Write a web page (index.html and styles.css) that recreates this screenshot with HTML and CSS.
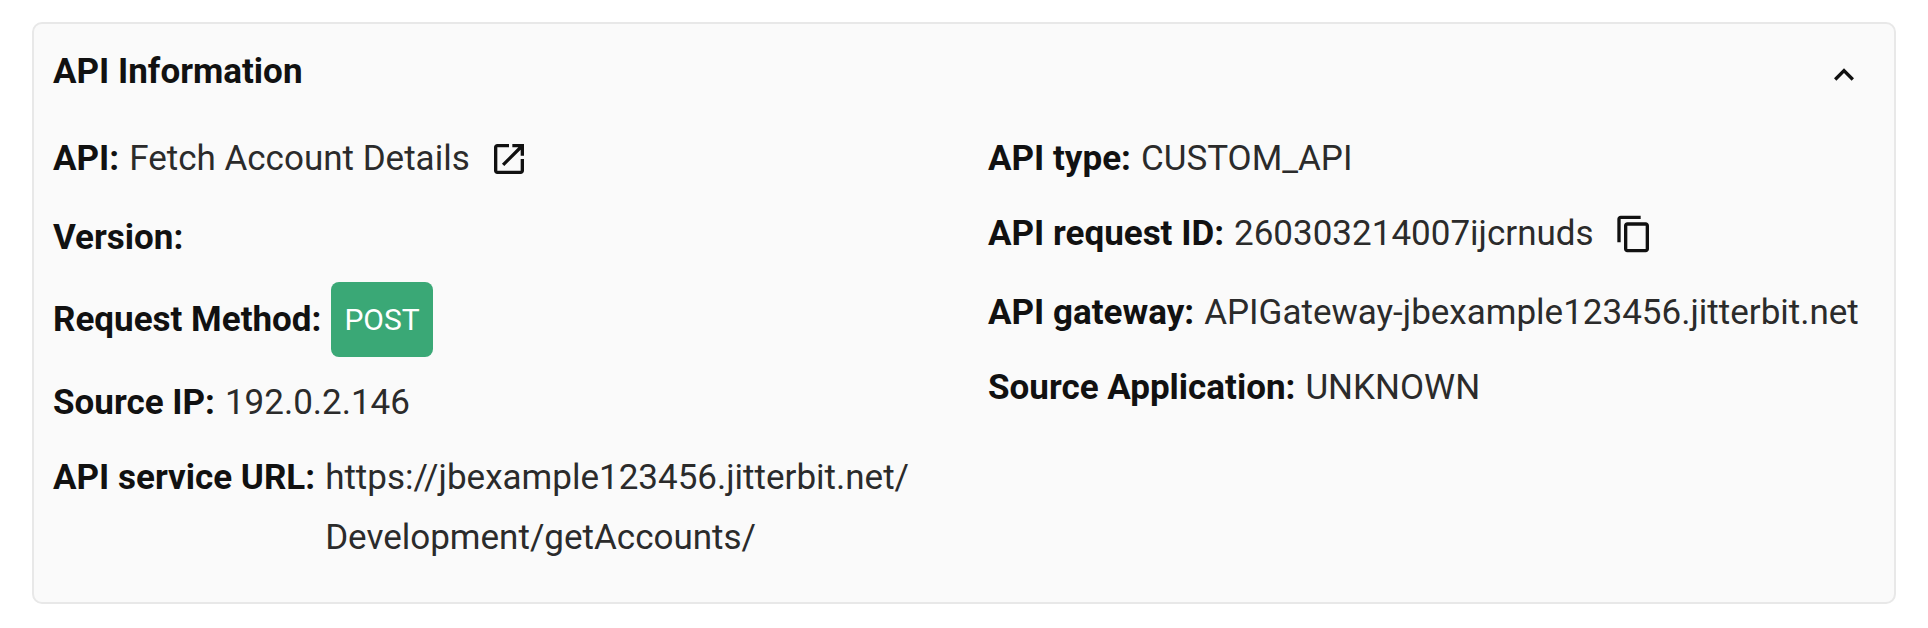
FILE: index.html
```html
<!DOCTYPE html>
<html lang="en">

<head>
    <meta charset="UTF-8">
    <meta name="viewport" content="width=device-width, initial-scale=1.0">
    <title>API Information</title>
    <link rel="stylesheet" href="styles.css">
</head>

<body>
    <div class="card">
        <div class="card-header">
            <h2 class="card-title">API Information</h2>
            <svg class="icon icon-toggle" viewBox="0 0 24 24"><path d="M12 8l-6 6 1.41 1.41L12 10.83l4.59 4.58L18 14z"/></svg>
        </div>

        <div class="columns">
            <div class="column">
                <div class="row row-icon">
                    <b>API:</b> <span>Fetch Account Details</span>
                    <svg class="icon icon-after" viewBox="0 0 24 24"><path d="M19 19H5V5h7V3H5c-1.11 0-2 .9-2 2v14c0 1.1.89 2 2 2h14c1.1 0 2-.9 2-2v-7h-2v7zM14 3v2h3.59l-9.83 9.83 1.41 1.41L19 6.41V10h2V3h-7z"/></svg>
                </div>
                <div class="row"><b>Version:</b></div>
                <div class="row row-method">
                    <b>Request Method:</b>
                    <span class="badge">POST</span>
                </div>
                <div class="row"><b>Source IP:</b> <span>192.0.2.146</span></div>
                <div class="row row-url">
                    <b>API service URL:</b>
                    <span class="url">https://jbexample123456.jitterbit.net/<br>Development/getAccounts/</span>
                </div>
            </div>

            <div class="column">
                <div class="row row-type"><b>API type:</b> <span>CUSTOM_API</span></div>
                <div class="row row-icon">
                    <b>API request ID:</b> <span>260303214007ijcrnuds</span>
                    <svg class="icon icon-after icon-copy" viewBox="0 0 24 24"><path d="M16 1H4c-1.1 0-2 .9-2 2v14h2V3h12V1zm3 4H8c-1.1 0-2 .9-2 2v14c0 1.1.9 2 2 2h11c1.1 0 2-.9 2-2V7c0-1.1-.9-2-2-2zm0 16H8V7h11v14z"/></svg>
                </div>
                <div class="row"><b>API gateway:</b> <span>APIGateway-jbexample123456.jitterbit.net</span></div>
                <div class="row"><b>Source Application:</b> <span>UNKNOWN</span></div>
            </div>
        </div>
    </div>
</body>

</html>
```

FILE: styles.css
```css
body {
    margin: 0;
    padding: 22px 32px 24px;
    font-family: Roboto, sans-serif;
    background-color: white;
}

.card {
    height: 582px;
    box-sizing: border-box;
    padding: 0 19px;
    background-color: #fafafa;
    border: 2px solid #e8e8e8;
    border-radius: 10px;
}

.card-header {
    display: flex;
    align-items: center;
    justify-content: space-between;
    height: 94px;
    margin-right: 11px;
}

.card-title {
    margin: 0;
    font-size: 35px;
    font-weight: 700;
    color: #111;
}

.icon {
    width: 40px;
    height: 40px;
    flex-shrink: 0;
    fill: #111;
}

.icon-toggle {
    margin-top: 8px;
}

.columns {
    display: grid;
    grid-template-columns: 1fr 1fr;
    column-gap: 48px;
    margin-top: 7px;
}

.column {
    display: flex;
    flex-direction: column;
    gap: 15px;
}

.row {
    display: flex;
    align-items: center;
    gap: 10px;
    min-height: 60px;
    font-size: 35px;
    line-height: 60px;
    color: #2b2b2b;
}

.row b {
    font-weight: 700;
    color: #111;
}

.row-type {
    margin: 4px 0 -4px;
}

.row-icon {
    min-height: 68px;
}

.row-method {
    margin: -1px 0 1px;
}

.icon-after {
    margin-left: 9px;
}

.icon-copy {
    margin-left: 10px;
}

.row-url {
    align-items: flex-start;
}

.badge {
    padding: 0 13px;
    height: 75px;
    line-height: 75px;
    font-size: 30px;
    color: white;
    background-color: #3aa876;
    border-radius: 8px;
}
```
